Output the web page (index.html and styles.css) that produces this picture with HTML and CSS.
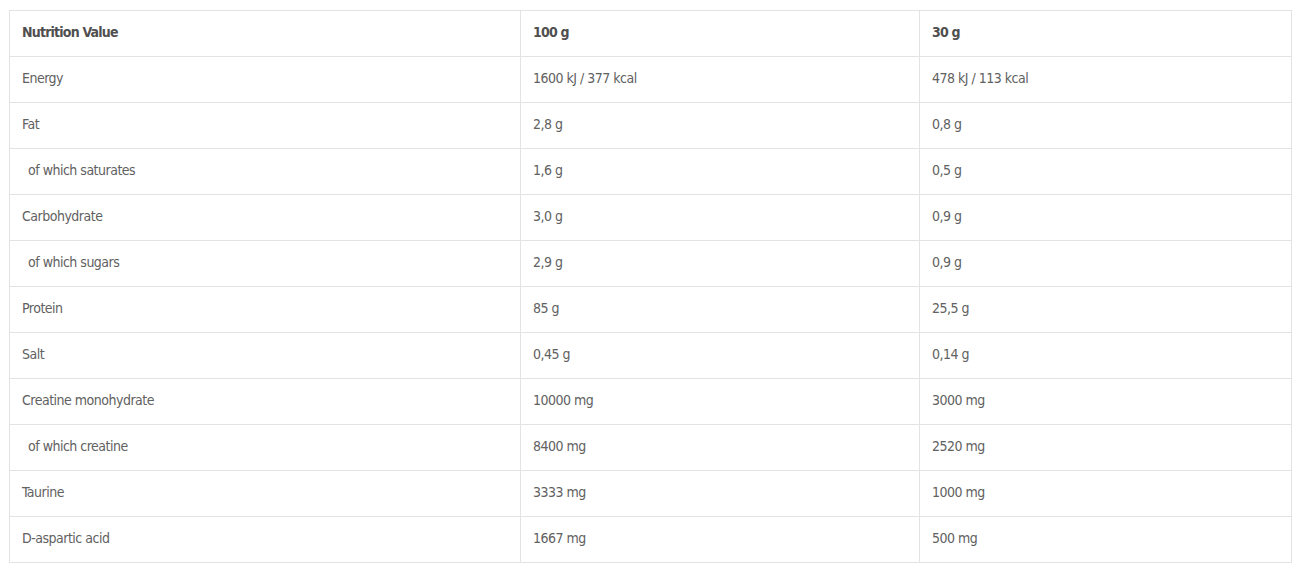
FILE: index.html
```html
<!DOCTYPE html>
<html>
<head>
<meta charset="utf-8">
<link rel="stylesheet" href="styles.css">
</head>
<body>
<div class="wrap">
<table class="nutri">
<colgroup><col class="c1"><col class="c2"><col class="c3"></colgroup>
<thead>
<tr><th>Nutrition Value</th><th>100 g</th><th>30 g</th></tr>
</thead>
<tbody>
<tr><td>Energy</td><td>1600 kJ / 377 kcal</td><td>478 kJ / 113 kcal</td></tr>
<tr><td>Fat</td><td>2,8 g</td><td>0,8 g</td></tr>
<tr><td class="sub">of which saturates</td><td>1,6 g</td><td>0,5 g</td></tr>
<tr><td>Carbohydrate</td><td>3,0 g</td><td>0,9 g</td></tr>
<tr><td class="sub">of which sugars</td><td>2,9 g</td><td>0,9 g</td></tr>
<tr><td>Protein</td><td>85 g</td><td>25,5 g</td></tr>
<tr><td>Salt</td><td>0,45 g</td><td>0,14 g</td></tr>
<tr><td>Creatine monohydrate</td><td>10000 mg</td><td>3000 mg</td></tr>
<tr><td class="sub">of which creatine</td><td>8400 mg</td><td>2520 mg</td></tr>
<tr><td>Taurine</td><td>3333 mg</td><td>1000 mg</td></tr>
<tr><td>D-aspartic acid</td><td>1667 mg</td><td>500 mg</td></tr>
</tbody>
</table>
</div>
</body>
</html>
```

FILE: styles.css
```css
html, body {
  margin: 0;
  background: #fff;
}
.wrap {
  padding: 10px 9px;
}
.nutri {
  border-collapse: collapse;
  width: 1282px;
  table-layout: fixed;
  font-family: "DejaVu Sans Condensed", "DejaVu Sans", sans-serif;
  font-stretch: condensed;
  font-size: 14px;
  letter-spacing: -0.5px;
  color: #616161;
}
.c1 { width: 511px; }
.c2 { width: 399px; }
.c3 { width: 372px; }
.nutri th, .nutri td {
  border: 1px solid #e3e3e3;
  height: 46px;
  padding: 0 12px 4px;
  text-align: left;
  vertical-align: middle;
  box-sizing: border-box;
}
.nutri th {
  font-weight: bold;
  letter-spacing: -0.8px;
  color: #4f4f4f;
}
.nutri td.sub {
  padding-left: 18px;
}
```
